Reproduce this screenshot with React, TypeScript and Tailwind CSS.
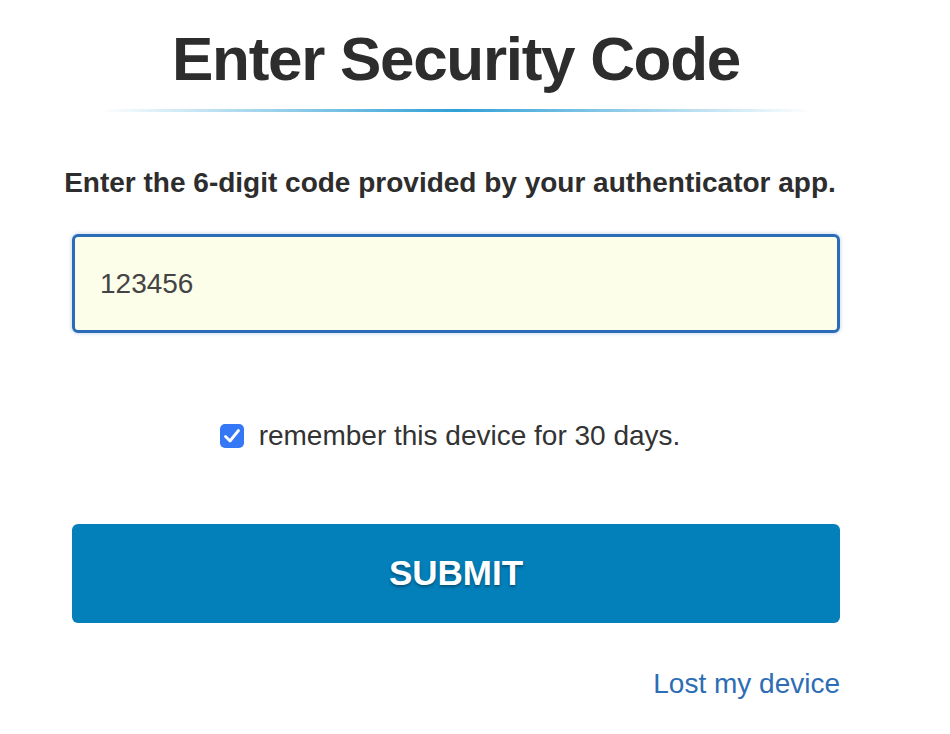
import { useState } from 'react';

export default function App() {
  const [code, setCode] = useState('123456');
  const [remember, setRemember] = useState(true);

  return (
    <div className="min-h-screen bg-white font-['Liberation_Sans',Arial,sans-serif]">
      <div className="ml-[72px] w-[768px] flex flex-col">
        {/* Titel */}
        <h1 className="pt-[28px] text-center text-[62px] leading-[62px] font-bold tracking-[-1.3px] text-[#2d2d2d] whitespace-nowrap">
          Enter Security Code
        </h1>
        <div className="mt-[19px] mx-[28px] h-[3px] bg-linear-to-r from-white/0 via-[#2fa0d6] to-white/0" />

        <p className="mt-[55px] -ml-[14px] -mr-[2px] text-center text-[28px] leading-[32px] font-bold text-[#2d2d2d] whitespace-nowrap">
          Enter the 6-digit code provided by your authenticator app.
        </p>

        <input
          value={code}
          onChange={(e) => setCode(e.target.value)}
          className="mt-[35px] h-[99px] w-full rounded-[6px] border-[3px] border-[#2b6cb8] bg-[#fcfee9] pl-[25px] text-[28px] text-[#444] outline-none shadow-[0_0_4px_rgba(43,108,184,0.35)] font-['Liberation_Sans',Arial,sans-serif]"
        />

        <label className="mt-[87px] pr-[12px] flex items-center justify-center gap-[15px] h-[32px] cursor-pointer">
          <span
            onClick={() => setRemember(!remember)}
            className={`flex h-[24px] w-[24px] shrink-0 items-center justify-center rounded-[5px] ${remember ? 'bg-[#3478f6]' : 'border-2 border-gray-400 bg-white'}`}
          >
            {remember && (
              <svg width="24" height="24" viewBox="0 0 24 24" fill="none" className="shrink-0">
                <path d="M5.5 12.5 L10 17 L18.5 6.5" stroke="white" strokeWidth="2.8" strokeLinecap="round" strokeLinejoin="round" />
              </svg>
            )}
          </span>
          <span className="text-[28px] leading-[32px] text-[#333]">remember this device for 30 days.</span>
        </label>

        <button className="mt-[72px] h-[99px] w-full rounded-[6px] bg-[#037fba] text-[35px] font-bold text-white [text-shadow:0_2px_3px_rgba(0,0,0,0.35)]">
          SUBMIT
        </button>

        <a href="#" className="mt-[45px] self-end text-[28px] leading-[32px] text-[#2d6db5]">
          Lost my device
        </a>
      </div>
    </div>
  );
}
